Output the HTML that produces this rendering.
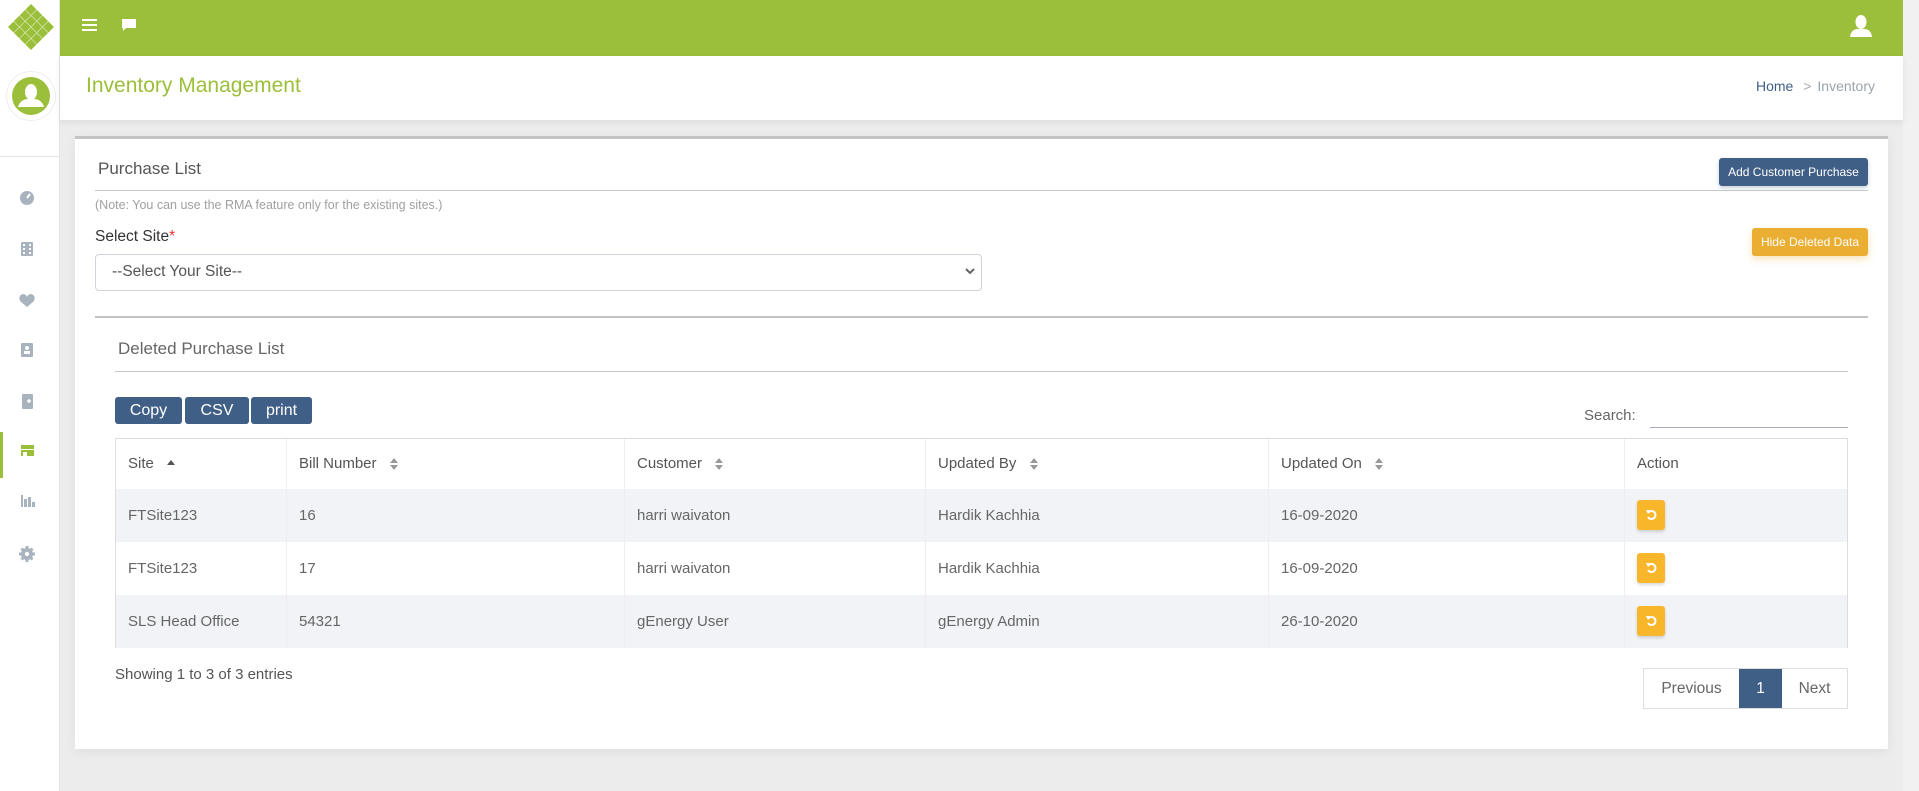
<!DOCTYPE html>
<html><head><meta charset="utf-8"><style>
*{box-sizing:border-box;margin:0;padding:0}
body{width:1919px;height:791px;overflow:hidden;background:#ececec;font-family:"Liberation Sans",Arial,sans-serif;position:relative}
.a{position:absolute}
.side{left:0;top:0;width:60px;height:791px;background:#fff;border-right:1px solid #e3e3e3}
.top{left:60px;top:0;width:1843px;height:56px;background:#9bbf3a}
.tbar{left:60px;top:56px;width:1843px;height:64px;background:#fff;box-shadow:0 2px 6px rgba(0,0,0,.08)}
.card{left:75px;top:136px;width:1813px;height:613px;background:#fff;border-top:3px solid #c4c4c4;box-shadow:0 3px 10px rgba(0,0,0,.06)}
.btn{background:#3f5f86;color:#fff;border-radius:3px;font-size:16px;text-align:center;line-height:27px;height:27px}
table{border-collapse:collapse;position:absolute;left:115px;top:438px;width:1733px;font-size:15px;color:#666}
td,th{text-align:left;font-weight:normal;padding:0 0 0 12px;border-left:1px solid #eee}
th{height:50px;color:#555;border-top:1px solid #ddd}
tr.r{height:53px}
tr.o{background:#f2f3f7}
td:first-child,th:first-child{border-left:1px solid #ddd;}
th:last-child,td:last-child{border-right:1px solid #ddd}
.ab{width:28px;height:30px;background:#f8b62b;border-radius:3px;box-shadow:0 2px 3px rgba(0,0,0,.15);display:flex;align-items:center;justify-content:center}
.so{display:inline-block;vertical-align:middle;margin-left:8px}
</style></head><body>
<div class="a side"></div>
<svg class="a" style="left:8px;top:4px" width="46" height="46" viewBox="0 0 46 46"><polygon points="23,0 46,23 23,46 0,23" fill="#9bbf3a"/><g stroke="#fff" stroke-width="0.8" opacity=".6"><line x1="5.75" y1="17.25" x2="28.75" y2="40.25"/><line x1="11.5" y1="11.5" x2="34.5" y2="34.5"/><line x1="17.25" y1="5.75" x2="40.25" y2="28.75"/><line x1="17.25" y1="40.25" x2="40.25" y2="17.25"/><line x1="11.5" y1="34.5" x2="34.5" y2="11.5"/><line x1="5.75" y1="28.75" x2="28.75" y2="5.75"/></g></svg>
<div class="a" style="left:6px;top:71px;width:50px;height:50px;border-radius:50%;border:1px solid #eee;background:#fff"></div>
<svg class="a" style="left:12px;top:77px" width="38" height="38" viewBox="0 0 38 38"><circle cx="19" cy="19" r="19" fill="#9bbf3a"/><ellipse cx="19" cy="15" rx="6" ry="8" fill="#fff"/><path d="M6 30 Q8 23 15 22 L23 22 Q30 23 32 30 Z" fill="#fff"/></svg>
<div class="a" style="left:0;top:156px;width:60px;height:1px;background:#e6e6e6"></div>
<div class="a" style="left:0;top:432px;width:3px;height:46px;background:#9bbf3a"></div>
<svg class="a" style="left:18px;top:189px" width="18" height="380" viewBox="0 0 18 380" fill="#a9b3bd">
<circle cx="9" cy="9" r="7"/><path d="M9 9 L12 5" stroke="#fff" stroke-width="2"/>
<rect x="3" y="53" width="12" height="14" rx="1"/><g fill="#fff"><rect x="5" y="55" width="2" height="2"/><rect x="11" y="55" width="2" height="2"/><rect x="5" y="59" width="2" height="2"/><rect x="11" y="59" width="2" height="2"/><rect x="5" y="63" width="2" height="2"/><rect x="11" y="63" width="2" height="2"/></g>
<path d="M9 118 L2 112 Q0 106 5 105 Q8 105 9 108 Q10 105 13 105 Q18 106 16 112 Z"/>
<rect x="3" y="154" width="12" height="14" rx="1"/><circle cx="9" cy="159" r="2" fill="#fff"/><rect x="6" y="162" width="6" height="3" fill="#fff"/>
<rect x="4" y="205" width="11" height="15" rx="1"/><path d="M9 212 h4 M11 210 v4" stroke="#fff" stroke-width="1.5"/>
<g fill="#9bbf3a"><rect x="3" y="256" width="13" height="4"/><rect x="3" y="261" width="13" height="6"/></g><rect x="5" y="263" width="4" height="4" fill="#fff"/>
<rect x="3" y="306" width="2" height="12"/><rect x="6" y="310" width="3" height="8"/><rect x="10" y="308" width="3" height="10"/><rect x="14" y="313" width="3" height="5"/>
<g stroke="#a9b3bd" stroke-width="3"><line x1="9" y1="357" x2="9" y2="373"/><line x1="1" y1="365" x2="17" y2="365"/><line x1="3.5" y1="359.5" x2="14.5" y2="370.5"/><line x1="14.5" y1="359.5" x2="3.5" y2="370.5"/></g><circle cx="9" cy="365" r="6"/><circle cx="9" cy="365" r="2.2" fill="#fff"/>
</svg>
<div class="a top"></div>
<svg class="a" style="left:82px;top:19px" width="15" height="12"><rect y="0" width="15" height="2" fill="#fff"/><rect y="5" width="15" height="2" fill="#fff"/><rect y="10" width="15" height="2" fill="#fff"/></svg>
<svg class="a" style="left:122px;top:19px" width="14" height="13"><path d="M0 0 H14 V9 H4 L1 12 V9 H0 Z" fill="#fff"/></svg>
<svg class="a" style="left:1850px;top:14px" width="22" height="24"><ellipse cx="11" cy="8" rx="5.5" ry="7" fill="#fff"/><path d="M0 23 Q1 15 8 15 L14 15 Q21 15 22 23 Z" fill="#fff"/></svg>
<div class="a" style="left:1903px;top:0;width:16px;height:791px;background:#f1f1f1"></div>
<div class="a tbar"></div>
<div class="a" style="left:86px;top:74px;font-size:21px;color:#9bbf3a">Inventory Management</div>
<div class="a" style="left:1756px;top:78px;font-size:14px;color:#3f5f86">Home <span style="color:#aaa;margin:0 6px">&gt;</span><span style="color:#9aa3ad">Inventory</span></div>
<div class="a card"></div>
<div class="a" style="left:98px;top:159px;font-size:17px;color:#555">Purchase List</div>
<div class="a btn" style="left:1719px;top:158px;width:149px;height:28px;font-size:12px;line-height:28px;box-shadow:0 2px 4px rgba(63,95,134,.3)">Add Customer Purchase</div>
<div class="a" style="left:95px;top:190px;width:1773px;height:1px;background:#c6c6c6"></div>
<div class="a" style="left:95px;top:198px;font-size:12.5px;color:#a0a0a0">(Note: You can use the RMA feature only for the existing sites.)</div>
<div class="a" style="left:95px;top:228px;font-size:15.5px;color:#333">Select Site<span style="color:#e33">*</span></div>
<div class="a btn" style="left:1752px;top:228px;width:116px;height:28px;font-size:12px;line-height:28px;background:#e9ae32;box-shadow:0 3px 8px rgba(233,174,50,.35)">Hide Deleted Data</div>
<div class="a" style="left:95px;top:254px;width:887px;height:37px;border:1px solid #ced4da;border-radius:4px;font-size:15.5px;color:#555;padding:8px 0 0 16px">--Select Your Site--</div>
<svg class="a" style="left:965px;top:268px" width="10" height="8"><path d="M1 1 L5 5 L9 1" stroke="#666" stroke-width="2" fill="none"/></svg>
<div class="a" style="left:95px;top:316px;width:1773px;height:2px;background:#c2c2c2"></div>
<div class="a" style="left:118px;top:339px;font-size:17px;color:#666">Deleted Purchase List</div>
<div class="a" style="left:115px;top:371px;width:1733px;height:1px;background:#c6c6c6"></div>
<div class="a btn" style="left:115px;top:397px;width:67px">Copy</div>
<div class="a btn" style="left:185px;top:397px;width:64px">CSV</div>
<div class="a btn" style="left:251px;top:397px;width:61px">print</div>
<div class="a" style="left:1584px;top:407px;font-size:15px;color:#666">Search:</div>
<div class="a" style="left:1650px;top:427px;width:198px;height:1px;background:#aab"></div>
<table>
<tr><th style="width:171px">Site <svg class="so" width="10" height="12"><path d="M1 7 L5 2 L9 7 Z" fill="#555"/></svg></th><th style="width:338px">Bill Number <svg class="so" width="10" height="14"><path d="M1 6 L5 1 L9 6 Z M1 8 L5 13 L9 8 Z" fill="#999"/></svg></th><th style="width:301px">Customer <svg class="so" width="10" height="14"><path d="M1 6 L5 1 L9 6 Z M1 8 L5 13 L9 8 Z" fill="#999"/></svg></th><th style="width:343px">Updated By <svg class="so" width="10" height="14"><path d="M1 6 L5 1 L9 6 Z M1 8 L5 13 L9 8 Z" fill="#999"/></svg></th><th style="width:356px">Updated On <svg class="so" width="10" height="14"><path d="M1 6 L5 1 L9 6 Z M1 8 L5 13 L9 8 Z" fill="#999"/></svg></th><th>Action</th></tr>
<tr class="r o"><td>FTSite123</td><td>16</td><td>harri waivaton</td><td>Hardik Kachhia</td><td>16-09-2020</td><td><div class="ab"><svg width="12" height="12"><path d="M3 4 A4 4 0 1 1 3 8" stroke="#fff" stroke-width="2" fill="none"/><path d="M1 1 L5 1 L3 5 Z" fill="#fff"/></svg></div></td></tr>
<tr class="r"><td>FTSite123</td><td>17</td><td>harri waivaton</td><td>Hardik Kachhia</td><td>16-09-2020</td><td><div class="ab"><svg width="12" height="12"><path d="M3 4 A4 4 0 1 1 3 8" stroke="#fff" stroke-width="2" fill="none"/><path d="M1 1 L5 1 L3 5 Z" fill="#fff"/></svg></div></td></tr>
<tr class="r o"><td>SLS Head Office</td><td>54321</td><td>gEnergy User</td><td>gEnergy Admin</td><td>26-10-2020</td><td><div class="ab"><svg width="12" height="12"><path d="M3 4 A4 4 0 1 1 3 8" stroke="#fff" stroke-width="2" fill="none"/><path d="M1 1 L5 1 L3 5 Z" fill="#fff"/></svg></div></td></tr>
</table>
<div class="a" style="left:115px;top:666px;font-size:15px;color:#555">Showing 1 to 3 of 3 entries</div>
<div class="a" style="left:1643px;top:668px;width:205px;height:41px;border:1px solid #ddd;display:flex;font-size:15.5px;color:#666;line-height:39px">
<div style="width:95px;text-align:center">Previous</div><div style="width:43px;text-align:center;background:#3f5f86;color:#fff">1</div><div style="flex:1;text-align:center">Next</div></div>
</body></html>
